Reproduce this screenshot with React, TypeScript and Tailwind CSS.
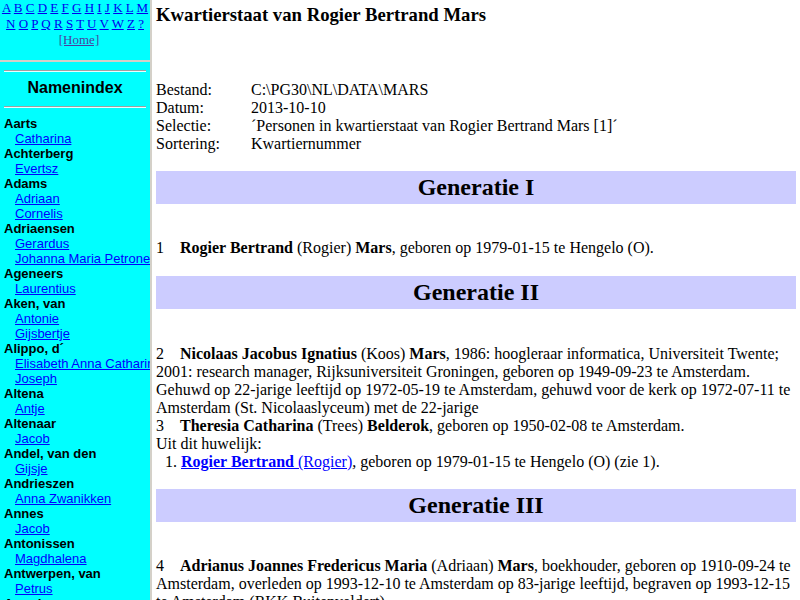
const letters1 = ["A", "B", "C", "D", "E", "F", "G", "H", "I", "J", "K", "L", "M"];
const letters2 = ["N", "O", "P", "Q", "R", "S", "T", "U", "V", "W", "Z", "?"];

const families: { name: string; given: string[] }[] = [
  { name: "Aarts", given: ["Catharina"] },
  { name: "Achterberg", given: ["Evertsz"] },
  { name: "Adams", given: ["Adriaan", "Cornelis"] },
  { name: "Adriaensen", given: ["Gerardus", "Johanna Maria Petronella"] },
  { name: "Ageneers", given: ["Laurentius"] },
  { name: "Aken, van", given: ["Antonie", "Gijsbertje"] },
  { name: "Alippo, d´", given: ["Elisabeth Anna Catharina", "Joseph"] },
  { name: "Altena", given: ["Antje"] },
  { name: "Altenaar", given: ["Jacob"] },
  { name: "Andel, van den", given: ["Gijsje"] },
  { name: "Andrieszen", given: ["Anna Zwanikken"] },
  { name: "Annes", given: ["Jacob"] },
  { name: "Antonissen", given: ["Magdhalena"] },
  { name: "Antwerpen, van", given: ["Petrus"] },
  { name: "Arends", given: ["Hendrik"] },
];

const info = [
  ["Bestand:", "C:\\PG30\\NL\\DATA\\MARS"],
  ["Datum:", "2013-10-10"],
  ["Selectie:", "´Personen in kwartierstaat van Rogier Bertrand Mars [1]´"],
  ["Sortering:", "Kwartiernummer"],
];

function LetterRow({ letters }: { letters: string[] }) {
  return (
    <div className="leading-[16px] whitespace-nowrap">
      {letters.map((l, i) => (
        <span key={l}>
          <a href="#" className="text-[#0000ee] underline">
            {l}
          </a>
          {i < letters.length - 1 ? " " : ""}
        </span>
      ))}
    </div>
  );
}

function GenBar({ title, className }: { title: string; className: string }) {
  return (
    <div
      className={
        "flex h-[33px] items-center justify-center bg-[#ccccff] pb-[2px] text-[24px] font-bold " +
        className
      }
    >
      {title}
    </div>
  );
}

function Num({ n }: { n: string }) {
  return <span className="inline-block w-[24px]">{n}</span>;
}

export default function App() {
  return (
    <div className="flex h-[600px] w-[800px] overflow-hidden bg-white">
      <div className="flex w-[150px] shrink-0 flex-col">
        <div className="h-[60px] overflow-hidden bg-[#00ffff] text-center font-['Liberation_Serif',serif] text-[13px]">
          <LetterRow letters={letters1} />
          <LetterRow letters={letters2} />
          <div className="pl-[8px] leading-[16px]">
            <a href="#" className="text-[#4b3fa0] underline">
              [Home]
            </a>
          </div>
        </div>
        <div className="h-[2px] bg-[#d4d0c8]" />
        <div className="flex-1 overflow-hidden bg-[#00ffff] font-['Liberation_Sans',Arial,sans-serif] text-[13px] text-black">
          <div className="mx-[4px] mt-[8px] border-t border-b border-t-[#a0a0a0] border-b-[#e8ffff]" />
          <div className="mt-[7px] text-center text-[16px] leading-[18px] font-bold">
            Namenindex
          </div>
          <div className="mx-[4px] mt-[9px] border-t border-b border-t-[#a0a0a0] border-b-[#e8ffff]" />
          <div className="mt-[8px] leading-[15px] whitespace-nowrap">
            {families.map((f) => (
              <div key={f.name}>
                <div className="pl-[4px] font-bold">{f.name}</div>
                {f.given.map((g) => (
                  <div key={g} className="pl-[15px]">
                    <a href="#" className="text-[#0000ff] underline">
                      {g}
                    </a>
                  </div>
                ))}
              </div>
            ))}
          </div>
        </div>
      </div>
      <div className="w-[2px] shrink-0 bg-[#d4d0c8]" />
      <div className="flex-1 overflow-hidden px-[4px] font-['Liberation_Serif',serif] text-[16px] leading-[18px] text-black">
        <h3 className="mt-[4px] text-[18.72px] leading-[22px] font-bold">
          Kwartierstaat van Rogier Bertrand Mars
        </h3>
        <div className="mt-[55px]">
          {info.map(([k, v]) => (
            <div key={k} className="flex">
              <span className="w-[95px] shrink-0">{k}</span>
              <span>{v}</span>
            </div>
          ))}
        </div>
        <GenBar title="Generatie I" className="mt-[18px]" />
        <p className="mt-[35px]">
          <Num n="1" />
          <b>Rogier Bertrand</b> (Rogier) <b>Mars</b>, geboren op 1979-01-15 te Hengelo (O).
        </p>
        <GenBar title="Generatie II" className="mt-[19px]" />
        <div className="mt-[36px]">
          <p>
            <Num n="2" />
            <b>Nicolaas Jacobus Ignatius</b> (Koos) <b>Mars</b>, 1986: hoogleraar informatica,
            Universiteit Twente; 2001: research manager, Rijksuniversiteit Groningen, geboren op
            1949-09-23 te Amsterdam. Gehuwd op 22-jarige leeftijd op 1972-05-19 te Amsterdam, gehuwd
            voor de kerk op 1972-07-11 te Amsterdam (St. Nicolaaslyceum) met de 22-jarige
          </p>
          <p>
            <Num n="3" />
            <b>Theresia Catharina</b> (Trees) <b>Belderok</b>, geboren op 1950-02-08 te Amsterdam.
          </p>
          <p>Uit dit huwelijk:</p>
          <p className="pl-[9px]">
            1.{" "}
            <a href="#" className="text-[#0000ff] underline">
              <b>Rogier Bertrand </b>(Rogier)
            </a>
            , geboren op 1979-01-15 te Hengelo (O) (zie 1).
          </p>
        </div>
        <GenBar title="Generatie III" className="mt-[18px]" />
        <p className="mt-[35px]">
          <Num n="4" />
          <b>Adrianus Joannes Fredericus Maria</b> (Adriaan) <b>Mars</b>, boekhouder, geboren op
          1910-09-24 te Amsterdam, overleden op 1993-12-10 te Amsterdam op 83-jarige leeftijd,
          begraven op 1993-12-15 te Amsterdam (RKK Buitenveldert).
        </p>
      </div>
    </div>
  );
}
